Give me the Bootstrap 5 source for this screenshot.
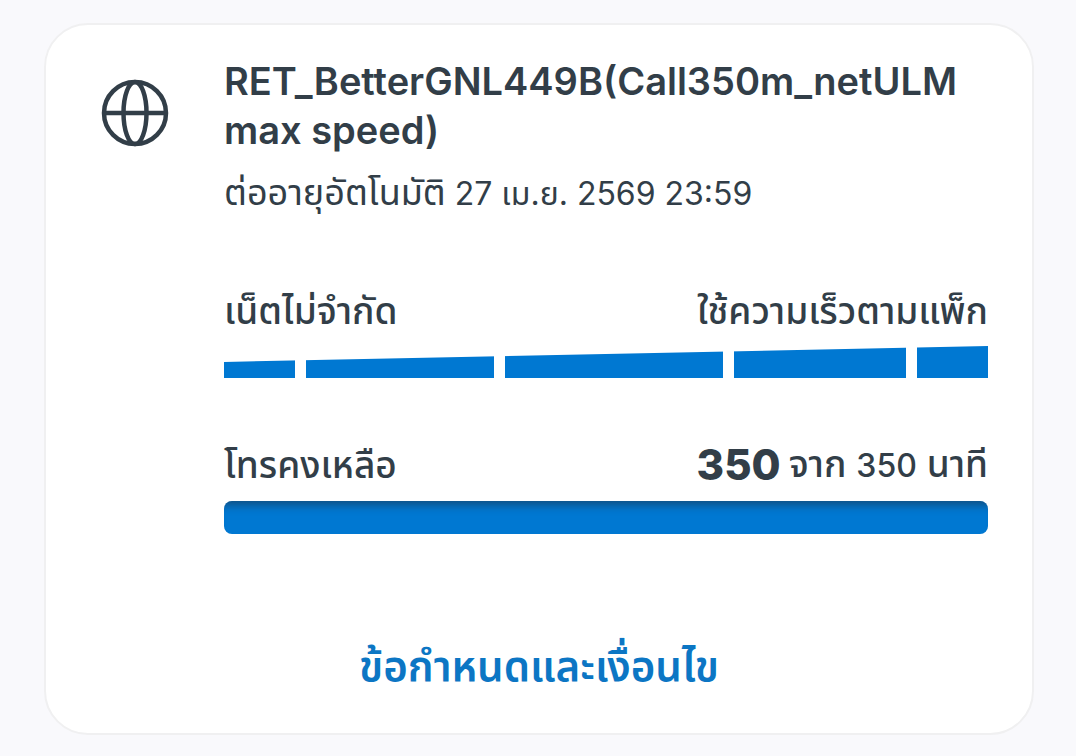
<!DOCTYPE html>
<html lang="th">
<head>
<meta charset="utf-8">
<meta name="viewport" content="width=device-width, initial-scale=1">
<title>RET_BetterGNL449B</title>
<link href="https://cdn.jsdelivr.net/npm/bootstrap@5.3.0/dist/css/bootstrap.min.css" rel="stylesheet">
<style>
  :root { --ink: #323e48; --blue: #0078d2; }
  body { background: #f9f9fc; color: var(--ink); font-family: Inter, "Noto Sans Thai", sans-serif; font-size: 37px; line-height: 48px; }
  .page { padding: 23px 42px 21px 44px; }
  .plan { --bs-card-border-color: #f0f0f1; --bs-card-border-width: 2px; --bs-card-border-radius: 44px; --bs-card-inner-border-radius: 42px; --bs-card-color: var(--ink); }
  .plan-body { padding: 32px 44px 0 55px; gap: 55px; }
  .globe { width: 68px; height: 68px; margin-top: 22px; }
  .plan-name { font-size: 38px; line-height: 49px; font-weight: 600; }
  .renewal { font-size: 36px; margin-top: 13px; }
  .num { font-size: 32px; }
  .usage-data { margin-top: 69px; }
  .usage-calls { margin-top: 62px; }
  .usage-label { font-weight: 500; }
  .left { font-size: 42px; font-weight: 800; }
  .speed { height: 32px; margin-top: 11px; gap: 11px; clip-path: polygon(0 16px, 100% 0, 100% 100%, 0 100%); }
  .speed span { background: var(--blue); flex: 1 1 0; }
  .progress { --bs-progress-height: 33px; --bs-progress-border-radius: 8px; --bs-progress-bar-bg: var(--blue); margin-top: 11px; }
  .progress-bar { box-shadow: inset 0 12px 10px -8px rgba(30, 50, 70, .6); }
  .terms { color: #0c76c4; font-size: 42px; line-height: 56px; font-weight: 600; }
  .plan-foot { padding: 104px 0 39px; }
</style>
</head>
<body>
<main class="page">
  <article class="card plan">
    <div class="plan-body d-flex align-items-start">
      <svg class="globe flex-shrink-0" viewBox="0 0 68 68" fill="none" stroke="#323e48" stroke-width="4.500" aria-hidden="true">
        <circle cx="34" cy="34" r="31"/>
        <ellipse cx="34" cy="34" rx="11.500" ry="31"/>
        <path d="M3 34h62"/>
      </svg>
      <div class="flex-grow-1">
        <h1 class="plan-name mb-0">RET_BetterGNL449B(Call350m_netULM<br>max speed)</h1>
        <p class="renewal mb-0">ต่ออายุอัตโนมัติ<span class="num"> 27 เม.ย. 2569 23:59</span></p>
        <section class="usage-data">
          <div class="usage-label d-flex justify-content-between"><span>เน็ตไม่จำกัด</span><span>ใช้ความเร็วตามแพ็ก</span></div>
          <div class="speed d-flex">
            <span style="flex-grow:71"></span><span style="flex-grow:188"></span><span style="flex-grow:218"></span><span style="flex-grow:172"></span><span style="flex-grow:71"></span>
          </div>
        </section>
        <section class="usage-calls">
          <div class="usage-label d-flex justify-content-between align-items-center"><span>โทรคงเหลือ</span><span class="d-flex align-items-center gap-2"><span class="left">350</span> <span>จาก <span class="num">350</span> นาที</span></span></div>
          <div class="progress" role="progressbar" aria-label="โทรคงเหลือ" aria-valuenow="350" aria-valuemin="0" aria-valuemax="350"><div class="progress-bar" style="width:100%"></div></div>
        </section>
      </div>
    </div>
    <div class="plan-foot d-flex justify-content-center"><a class="terms text-decoration-none" href="#">ข้อกำหนดและเงื่อนไข</a></div>
  </article>
</main>
<script src="https://cdn.jsdelivr.net/npm/bootstrap@5.3.0/dist/js/bootstrap.bundle.min.js"></script>
</body>
</html>
